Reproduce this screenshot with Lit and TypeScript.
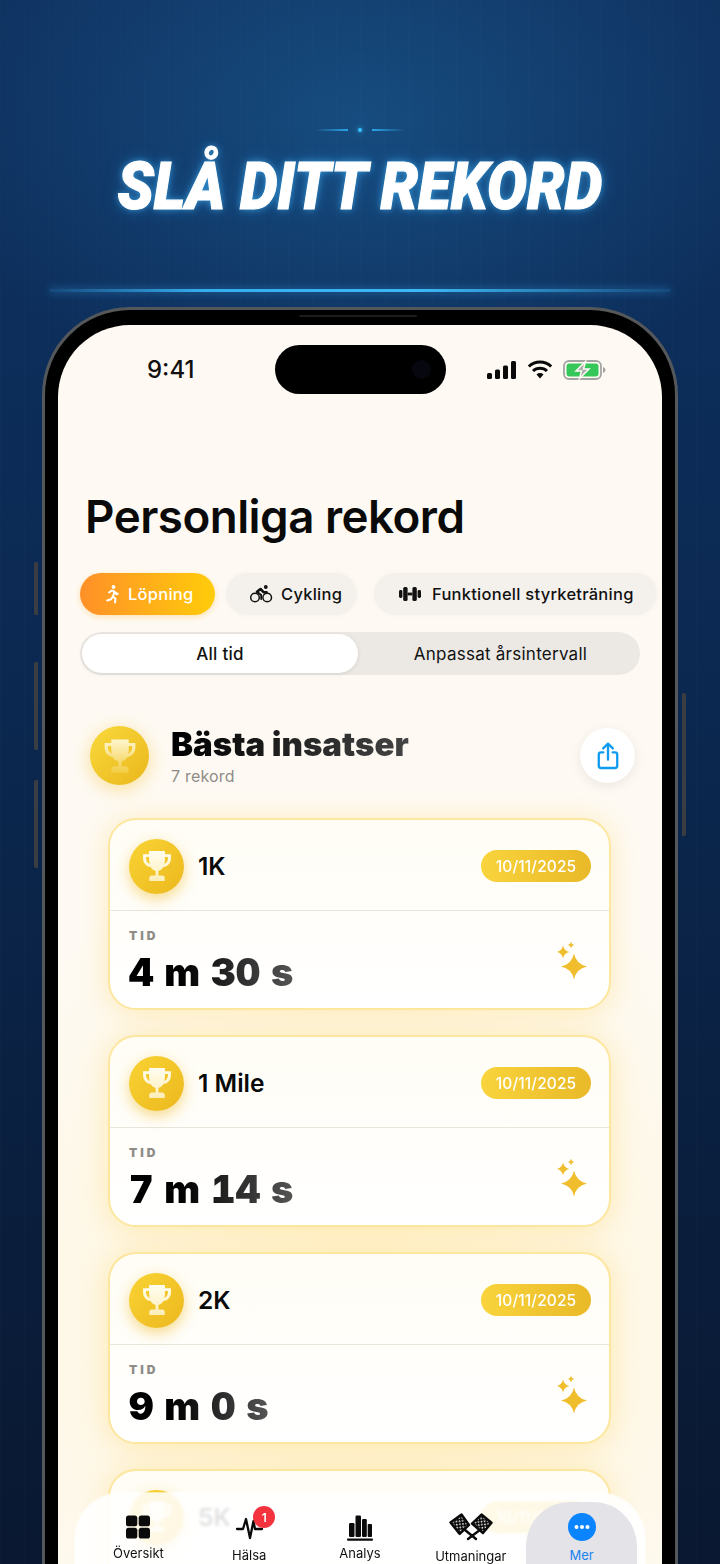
import { LitElement, html, css, svg } from "lit";
import { customElement } from "lit/decorators.js";

const trophyPath =
  "M7 2.500h10v2h3.800v2.700c0 2.800-2 5.100-4.700 5.500-.7 1.200-1.800 2.100-3.200 2.400V18h2.400c.9 0 1.600.7 1.600 1.600v1.900H7.100v-1.900c0-.9.7-1.600 1.600-1.600h2.400v-2.900c-1.400-.3-2.500-1.200-3.200-2.400C5.200 12.300 3.200 10 3.200 7.200V4.500H7v-2zM5.100 6.300v.9c0 1.500.9 2.900 2.300 3.500-.2-.8-.4-1.700-.4-2.600V6.300H5.100zM18.900 6.300H17v1.800c0 .9-.1 1.800-.4 2.600 1.400-.6 2.300-2 2.300-3.500v-.9z";

const trophy = (id: string, from: string, to: string) => html`<svg class="trophy" viewBox="0 0 24 24">
  <defs><linearGradient id=${id} x1="0" y1="0" x2="0" y2="1"><stop offset="0" stop-color=${from}></stop><stop offset="1" stop-color=${to}></stop></linearGradient></defs>
  <path fill=${`url(#${id})`} fill-rule="evenodd" d=${trophyPath}></path></svg>`;

const star = (cx: number, cy: number, r: number) => {
  const k = r * 0.17;
  return svg`<path d="M${cx} ${cy - r}Q${cx + k} ${cy - k} ${cx + r} ${cy}Q${cx + k} ${cy + k} ${cx} ${cy + r}Q${cx - k} ${cy + k} ${cx - r} ${cy}Q${cx - k} ${cy - k} ${cx} ${cy - r}Z"></path>`;
};

const sparkles = html`<svg class="sparkles" viewBox="0 0 30 38" fill="#f0bd2c">${star(6, 10, 6.5)}${star(14, 3, 3.2)}${star(17, 24.5, 13)}</svg>`;

const runner = html`<svg class="chip-ic" viewBox="0 0 20 20" fill="none" stroke="#fff" stroke-width="2" stroke-linecap="round" stroke-linejoin="round">
  <circle cx="11.5" cy="3" r="1.9" fill="#fff" stroke="none"></circle>
  <path d="M7 8.500 9.800 6.600l2.700.8-1.500 5 2.500 2.300-.5 3.800M14.500 10.300l-2-2.600M10.600 12.800l-1.500 2.400-3.900 1.300M12.800 8.500l3 1.400"></path></svg>`;

const bike = html`<svg class="chip-ic wide" viewBox="0 0 24 20" fill="none" stroke="#111" stroke-width="1.5" stroke-linecap="round" stroke-linejoin="round">
  <circle cx="6" cy="13.5" r="4.3"></circle><circle cx="18.2" cy="13.5" r="4.3"></circle>
  <circle cx="16.8" cy="3" r="1.9" fill="#111" stroke="none"></circle>
  <path stroke-width="2.6" d="M8 7.800 11.500 5l3 3.200h3"></path><path stroke-width="1.8" d="M9 8.500l3.200 2.500v4"></path></svg>`;

const dumbbell = html`<svg class="chip-ic wide" viewBox="0 0 24 20" fill="#111">
  <rect x="1" y="6" width="3.4" height="8" rx="1.4"></rect><rect x="5.2" y="3" width="4.4" height="14" rx="1.6"></rect>
  <rect x="9.6" y="8.6" width="4.8" height="2.8"></rect>
  <rect x="14.4" y="3" width="4.4" height="14" rx="1.6"></rect><rect x="19.6" y="6" width="3.4" height="8" rx="1.4"></rect></svg>`;

const share = html`<svg class="share-ic" viewBox="0 0 26 32" fill="none" stroke="#0f9bf0" stroke-width="2.5" stroke-linecap="round" stroke-linejoin="round">
  <path d="M8 12H5.500A2.500 2.500 0 0 0 3 14.500v12A2.500 2.500 0 0 0 5.500 29h15a2.500 2.500 0 0 0 2.500-2.500v-12a2.500 2.500 0 0 0-2.500-2.500H18"></path>
  <path d="M13 20V3M7.800 7.800 13 2.600l5.200 5.200"></path></svg>`;

const grid = html`<svg class="tab-ic" viewBox="0 0 30 30" fill="#0a0a0a">
  <rect x="3" y="3.5" width="11.3" height="10.8" rx="2.6"></rect><rect x="15.7" y="3.5" width="11.3" height="10.8" rx="2.6"></rect>
  <rect x="3" y="15.7" width="11.3" height="10.8" rx="2.6"></rect><rect x="15.7" y="15.700" width="11.3" height="10.8" rx="2.6"></rect></svg>`;

const pulse = html`<svg class="tab-ic" viewBox="0 0 30 30" fill="none" stroke="#0a0a0a" stroke-width="2.3" stroke-linecap="round" stroke-linejoin="round">
  <path d="M3 17h6l3-10 4 19 3.500-17 1.500 8h7"></path></svg>`;

const bars = html`<svg class="tab-ic" viewBox="0 0 30 30" fill="#0a0a0a">
  <rect x="4" y="11" width="5.5" height="14" rx="1.2"></rect><rect x="10.5" y="3.500" width="5.5" height="21.5" rx="1.2"></rect>
  <rect x="17" y="7" width="4.800" height="18" rx="1.2"></rect><rect x="22.700" y="12" width="4.300" height="13" rx="1"></rect>
  <rect x="2" y="26.500" width="26" height="2.2" rx="1"></rect></svg>`;

const flags = html`<svg class="flag-ic" viewBox="0 0 44 30">
  <defs><pattern id="chk" width="4.4" height="4.4" patternUnits="userSpaceOnUse" patternTransform="rotate(38)">
    <rect width="4.4" height="4.4" fill="#0a0a0a"></rect><rect width="1.5" height="1.500" fill="#fff"></rect><rect x="2.200" y="2.200" width="1.500" height="1.500" fill="#fff"></rect></pattern></defs>
  <path d="M1.500 10.500 12.500 2.500 20 13 10.700 22z" fill="url(#chk)" stroke="#0a0a0a" stroke-width="2.4" stroke-linejoin="round"></path>
  <path d="M23 11.500 32.500 2.500 42.500 10.700 34 21z" fill="url(#chk)" stroke="#0a0a0a" stroke-width="2.4" stroke-linejoin="round"></path>
  <path d="M16 18l11 9M31.500 17.500 19 27" stroke="#0a0a0a" stroke-width="2.400" stroke-linecap="round" fill="none"></path></svg>`;

const more = html`<svg class="more-ic" viewBox="0 0 28 28"><circle cx="14" cy="14" r="14" fill="#0a84ff"></circle>
  <circle cx="8.5" cy="14" r="2" fill="#fff"></circle><circle cx="14" cy="14" r="2" fill="#fff"></circle><circle cx="19.5" cy="14" r="2" fill="#fff"></circle></svg>`;

const records = [
  { name: "1K", time: "4 m 30 s" },
  { name: "1 Mile", time: "7 m 14 s" },
  { name: "2K", time: "9 m 0 s" },
  { name: "5K", time: "" },
];

@customElement("app-root")
export class AppRoot extends LitElement {
  static styles = css`
    :host {
      display: block;
      width: 720px;
      height: 1564px;
      overflow: hidden;
      font-family: Inter, "Noto Sans", sans-serif;
      background:
        repeating-linear-gradient(90deg, rgba(255, 255, 255, 0.012) 0 1px, transparent 1px 24px),
        radial-gradient(ellipse 430px 300px at 50% 120px, rgba(26, 88, 142, 0.7), rgba(26, 88, 142, 0) 100%),
        linear-gradient(180deg, #0f315f 0%, #0d2e5b 20%, #0b2850 45%, #0a1f3e 75%, #0a1831 100%);
    }
    .wrap { display: flex; flex-direction: column; height: 1564px; }
    .head { display: flex; flex-direction: column; align-items: center; padding-top: 128px; }
    .deco { display: flex; align-items: center; gap: 10px; height: 4px; }
    .deco i { display: block; width: 33px; height: 2px; }
    .deco i.l { background: linear-gradient(90deg, transparent, #2aa6e8); }
    .deco i.r { background: linear-gradient(90deg, #2aa6e8, transparent); }
    .deco b { display: block; width: 4px; height: 4px; border-radius: 50%; background: #35c4ff; box-shadow: 0 0 5px #35c4ff; }
    h1 {
      margin: 20px 0 0;
      height: 70px;
      line-height: 70px;
      font-family: Roboto, sans-serif;
      font-size: 66px;
      font-weight: 900;
      font-style: italic;
      white-space: nowrap;
      color: #fff;
      -webkit-text-stroke: 1.2px #fff;
      transform: scaleX(0.905);
      text-shadow: 0 0 8px rgba(70, 190, 255, 0.7), 0 0 18px rgba(60, 170, 255, 0.35);
    }
    .beam {
      margin-top: 67px;
      width: 620px;
      height: 3px;
      background: linear-gradient(90deg, rgba(50, 170, 240, 0.2), #35aef0 25%, #3db8f5 60%, rgba(50, 170, 240, 0.2));
      box-shadow: 0 0 8px rgba(60, 175, 245, 0.55);
    }
    .phone {
      position: relative;
      margin: 15px 42px 0;
      flex: 1;
      min-height: 0;
      border-radius: 88px 88px 0 0;
      background: #000;
      border: 3px solid #55585b;
      border-bottom: 0;
      padding: 15px 13px 0;
      box-sizing: border-box;
    }
    .speaker { position: absolute; left: 254px; top: 5px; width: 118px; height: 2px; border-radius: 1px; background: #1c1d1f; }
    .btn { position: absolute; width: 4px; background: #3a3d42; }
    .b1 { left: -11px; top: 252px; height: 53px; border-radius: 2px 0 0 2px; }
    .b2 { left: -11px; top: 352px; height: 88px; border-radius: 2px 0 0 2px; }
    .b3 { left: -11px; top: 470px; height: 88px; border-radius: 2px 0 0 2px; }
    .b4 { right: -11px; top: 383px; height: 143px; border-radius: 0 2px 2px 0; }
    .screen {
      position: relative;
      height: 100%;
      overflow: hidden;
      border-radius: 72px 72px 0 0;
      background:
        radial-gradient(ellipse 420px 520px at 50% 1000px, #fff3cf, rgba(255, 243, 207, 0) 100%),
        #fefaf3;
    }
    .status { display: grid; grid-template-columns: 217px 171px 1fr; height: 49px; padding: 20px 0 19px; align-items: center; }
    .time { padding-left: 89px; font-size: 24px; font-weight: 500; color: #111; }
    .island { position: relative; height: 49px; border-radius: 25px; background: #000; }
    .island i { position: absolute; right: 15px; top: 15px; width: 19px; height: 19px; border-radius: 50%; background: #07070f; }
    .sys { display: flex; align-items: center; gap: 10px; padding-left: 41px; }
    .page-title { margin: 76px 0 0 27px; font-size: 45.7px; line-height: 56px; font-weight: 600; color: #0a0a0a; letter-spacing: -0.5px; white-space: nowrap; }
    .chips { display: flex; gap: 11px; margin-top: 28px; padding-left: 22px; }
    .chip {
      display: flex; align-items: center; gap: 8px;
      flex: none;
      height: 42px; box-sizing: border-box;
      border-radius: 21px;
      background: #f4f1ec;
      font-size: 16.5px; font-weight: 500; color: #111;
      letter-spacing: 0.25px;
      white-space: nowrap;
      box-shadow: 0 0 6px rgba(0, 0, 0, 0.03);
    }
    .chip.on { width: 135px; padding-left: 22px; gap: 6px; background: linear-gradient(90deg, #ff9028, #ffcc0a); color: #fff; box-shadow: 0 2px 6px rgba(255, 170, 30, 0.3); }
    .chip.c2 { width: 131px; padding-left: 23px; }
    .chip.c3 { margin-left: 6px; padding-left: 24px; width: 283px; gap: 10px; }
    .chip-ic { width: 20px; height: 20px; flex: none; }
    .chip-ic.wide { width: 24px; }
    .seg {
      display: grid; grid-template-columns: 276px 1fr;
      margin: 17px 22px 0;
      height: 43px; padding: 2px; box-sizing: border-box;
      border-radius: 22px;
      background: #ece9e4;
      font-size: 17px; letter-spacing: 0.25px; color: #111;
    }
    .seg div { display: flex; align-items: center; justify-content: center; }
    .seg .opt { padding-left: 5px; }
    .seg .sel { background: #fff; border-radius: 20px; font-weight: 500; box-shadow: 0 1px 4px rgba(0, 0, 0, 0.1); }
    .section { display: flex; align-items: center; margin: 51px 27px 0 32px; height: 59px; }
    .medal { display: flex; align-items: center; justify-content: center; flex: none; border-radius: 50%; background: linear-gradient(135deg, #f9d93c, #eab71c); }
    .medal.big { width: 59px; height: 59px; box-shadow: 0 4px 18px rgba(245, 190, 40, 0.45); }
    .medal.big .trophy { width: 42px; height: 42px; }
    .medal.small { width: 55px; height: 55px; background: linear-gradient(135deg, #f9d334, #ecb81e); box-shadow: 0 5px 14px rgba(240, 185, 30, 0.5); }
    .medal.small .trophy { width: 38px; height: 38px; }
    .sec-text { flex: 1; margin-left: 22px; }
    .sec-title {
      font-size: 33px; line-height: 38px; font-weight: 900;
      background: linear-gradient(90deg, #000, #444 100%);
      -webkit-background-clip: text; background-clip: text; color: transparent;
      display: inline-block; white-space: nowrap;
    }
    .sec-sub { font-size: 16px; line-height: 20px; color: #8f8c87; margin-top: 3px; letter-spacing: 0.2px; }
    .share { display: flex; align-items: center; justify-content: center; width: 55px; height: 55px; border-radius: 50%; background: #fff; box-shadow: 0 3px 12px rgba(0, 0, 0, 0.08); }
    .share-ic { width: 24px; height: 30px; }
    .cards { display: flex; flex-direction: column; gap: 25px; margin: 33px 51px 0 50px; }
    .card {
      flex: none;
      height: 192px; box-sizing: border-box;
      border: 2px solid #fde69e;
      border-radius: 28px;
      background: linear-gradient(180deg, #fffdf5, #fffefb 60%, #fff);
      box-shadow: 0 2px 28px rgba(255, 205, 70, 0.32);
    }
    .card-head { display: flex; align-items: center; height: 91px; box-sizing: border-box; padding: 2px 18px 0 19px; border-bottom: 1px solid #e9e6dc; }
    .card-name { flex: 1; margin-left: 14px; font-size: 24.5px; font-weight: 600; color: #0a0a0a; }
    .date {
      display: flex; align-items: center; justify-content: center;
      width: 110px; height: 32px; border-radius: 16px;
      background: linear-gradient(90deg, #f9d232, #e8b61e);
      color: #fff; font-size: 15.5px; font-weight: 500; letter-spacing: 0.1px; opacity: 0.95;
    }
    .card-body { display: flex; justify-content: space-between; padding: 17px 22px 0 19px; }
    .lbl { font-size: 12px; line-height: 16px; font-weight: 900; letter-spacing: 3px; color: #8e8c87; }
    .val {
      margin-top: 5px; font-size: 38px; line-height: 46px; font-weight: 900;
      font-variant-numeric: tabular-nums;
      letter-spacing: 0.3px;
      background: linear-gradient(90deg, #000 30%, #555 100%);
      -webkit-background-clip: text; background-clip: text; color: transparent;
      display: inline-block; white-space: nowrap;
    }
    .sparkles { width: 30px; height: 38px; margin-top: 14px; }
    .tabbar {
      position: absolute; left: 17px; right: 17px; bottom: 0;
      height: 71px; box-sizing: border-box;
      display: grid; grid-template-columns: repeat(5, 1fr);
      padding: 9px 8px 0;
      border-radius: 46px 46px 0 0;
      background: rgba(255, 255, 255, 0.88);
      backdrop-filter: blur(1.5px);
      box-shadow: 0 0 0 1px rgba(255, 255, 255, 0.6);
    }
    .tab { display: flex; flex-direction: column; align-items: center; padding-top: 10px; position: relative; font-size: 13px; color: #111; white-space: nowrap; }
    .ic { display: flex; align-items: center; justify-content: center; height: 30px; position: relative; }
    .tab-ic { width: 30px; height: 30px; }
    .flag-ic { width: 44px; height: 30px; }
    .more-ic { width: 28px; height: 28px; }
    .tl { line-height: 16px; margin-top: 3px; }
    .tl.d2 { margin-top: 5px; }
    .tl.d3 { margin-top: 6px; }
    .badge { position: absolute; left: 19px; top: -6px; width: 22px; height: 22px; border-radius: 50%; background: #f4333f; color: #fff; font-size: 12px; font-weight: 600; display: flex; align-items: center; justify-content: center; }
    .tab.active { background: #e3e3e8; border-radius: 44px 44px 0 0; color: #1a84ee; }
  `;

  render() {
    return html`<div class="wrap">
      <div class="head">
        <div class="deco"><i class="l"></i><b></b><i class="r"></i></div>
        <h1>SLÅ DITT REKORD</h1>
        <div class="beam"></div>
      </div>
      <div class="phone">
        <i class="speaker"></i>
        <i class="btn b1"></i><i class="btn b2"></i><i class="btn b3"></i><i class="btn b4"></i>
        <div class="screen">
          <div class="status">
            <div class="time">9:41</div>
            <div class="island"><i></i></div>
            <div class="sys">
              <svg width="30" height="18" viewBox="0 0 30 18" fill="#0a0a0a"><rect x="0" y="12" width="5" height="6" rx="1.5"></rect><rect x="8" y="8.5" width="5" height="9.5" rx="1.5"></rect><rect x="16" y="4.5" width="5" height="13.5" rx="1.5"></rect><rect x="24" y="0" width="5" height="18" rx="1.5"></rect></svg>
              <svg width="26" height="19" viewBox="0 0 26 19" fill="none" stroke="#0a0a0a" stroke-width="3" stroke-linecap="butt"><path d="M1.800 6.500a16 16 0 0 1 22.400 0M6 11a10 10 0 0 1 14 0"></path><path d="M9.500 14.500a5 5 0 0 1 7 0L13 18.500z" fill="#0a0a0a" stroke="none"></path></svg>
              <svg width="44" height="20" viewBox="0 0 44 20"><rect x="1" y="1" width="37" height="18" rx="5" fill="none" stroke="#a3a5a3" stroke-width="1.8"></rect><rect x="3.5" y="3.5" width="32" height="13" rx="3" fill="#35c759"></rect><path d="M40 7c1.600.5 2.500 1.600 2.500 3s-.9 2.500-2.500 3z" fill="#a3a5a3"></path><path d="M22.500 1.500 13 11h5.500l-2 7.500L26 9h-5.500z" fill="#a9aba9" stroke="#fefaf3" stroke-width="1.5"></path></svg>
            </div>
          </div>
          <div class="page-title">Personliga rekord</div>
          <div class="chips">
            <div class="chip on">${runner}Löpning</div>
            <div class="chip c2">${bike}Cykling</div>
            <div class="chip c3">${dumbbell}Funktionell styrketräning</div>
          </div>
          <div class="seg"><div class="sel">All tid</div><div class="opt">Anpassat årsintervall</div></div>
          <div class="section">
            <div class="medal big">${trophy("tb", "#fff6cf", "#f3cd45")}</div>
            <div class="sec-text">
              <div class="sec-title">Bästa insatser</div>
              <div class="sec-sub">7 rekord</div>
            </div>
            <div class="share">${share}</div>
          </div>
          <div class="cards">
            ${records.map(
              (r, i) => html`<div class="card">
                <div class="card-head">
                  <div class="medal small">${trophy(`t${i}`, "#fffdf0", "#fdeeb8")}</div>
                  <div class="card-name">${r.name}</div>
                  <div class="date">10/11/2025</div>
                </div>
                ${r.time
                  ? html`<div class="card-body">
                      <div><div class="lbl">TID</div><div class="val">${r.time}</div></div>
                      ${sparkles}
                    </div>`
                  : ""}
              </div>`
            )}
          </div>
          <div class="tabbar">
            <div class="tab"><div class="ic">${grid}</div><div class="tl">Översikt</div></div>
            <div class="tab"><div class="ic">${pulse}<span class="badge">1</span></div><div class="tl d2">Hälsa</div></div>
            <div class="tab"><div class="ic">${bars}</div><div class="tl">Analys</div></div>
            <div class="tab"><div class="ic">${flags}</div><div class="tl d3">Utmaningar</div></div>
            <div class="tab active"><div class="ic">${more}</div><div class="tl d2">Mer</div></div>
          </div>
        </div>
      </div>
    </div>`;
  }
}
